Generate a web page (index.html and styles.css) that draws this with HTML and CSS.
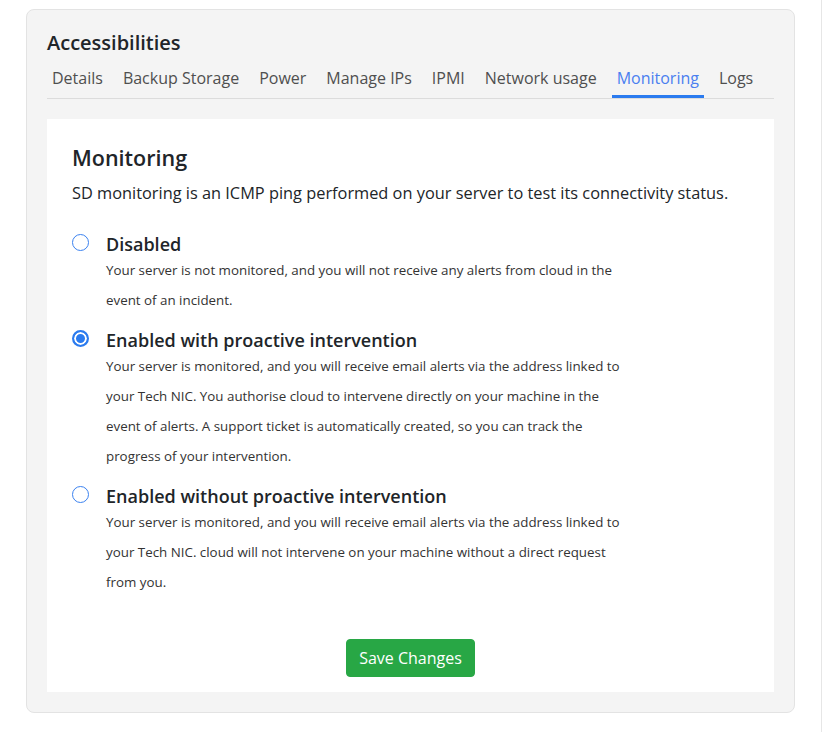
FILE: index.html
```html
<!DOCTYPE html>
<html lang="en">
<head>
<meta charset="utf-8">
<title>Accessibilities - Monitoring</title>
<link rel="stylesheet" href="styles.css">
</head>
<body>
<div class="page">
  <section class="card">
    <h2 class="card-title">Accessibilities</h2>
    <nav class="tabs">
      <a class="tab" href="#">Details</a>
      <a class="tab" href="#">Backup Storage</a>
      <a class="tab" href="#">Power</a>
      <a class="tab" href="#">Manage IPs</a>
      <a class="tab" href="#">IPMI</a>
      <a class="tab" href="#">Network usage</a>
      <a class="tab active" href="#">Monitoring</a>
      <a class="tab" href="#">Logs</a>
    </nav>
    <div class="panel">
      <h3 class="panel-title">Monitoring</h3>
      <p class="panel-intro">SD monitoring is an ICMP ping performed on your server to test its connectivity status.</p>

      <label class="option">
        <input class="radio" type="radio" name="monitoring">
        <span class="option-body">
          <span class="option-label">Disabled</span>
          <span class="option-desc">Your server is not monitored, and you will not receive any alerts from cloud in the event of an incident.</span>
        </span>
      </label>

      <label class="option">
        <input class="radio" type="radio" name="monitoring" checked>
        <span class="option-body">
          <span class="option-label">Enabled with proactive intervention</span>
          <span class="option-desc">Your server is monitored, and you will receive email alerts via the address linked to your Tech NIC. You authorise cloud to intervene directly on your machine in the event of alerts. A support ticket is automatically created, so you can track the progress of your intervention.</span>
        </span>
      </label>

      <label class="option">
        <input class="radio" type="radio" name="monitoring">
        <span class="option-body">
          <span class="option-label">Enabled without proactive intervention</span>
          <span class="option-desc">Your server is monitored, and you will receive email alerts via the address linked to your Tech NIC. cloud will not intervene on your machine without a direct request from you.</span>
        </span>
      </label>

      <div class="actions">
        <button class="btn-save" type="button">Save Changes</button>
      </div>
    </div>
  </section>
</div>
</body>
</html>
```
FILE: styles.css
```css
* { box-sizing: border-box; }

html, body {
  margin: 0;
  padding: 0;
  background: #ffffff;
}

body {
  font-family: "Open Sans", "Noto Sans", "Liberation Sans", sans-serif;
  color: #212529;
}

.page {
  width: 822px;
  min-height: 732px;
  border-right: 1px solid #e6e6e6;
  padding: 9px 0 0 26px;
}

.card {
  width: 769px;
  background: #f4f4f4;
  border: 1px solid #e3e3e3;
  border-radius: 8px;
  padding: 20px;
}

.card-title {
  margin: 0;
  font-size: 20px;
  line-height: 26px;
  font-weight: 600;
  color: #212529;
}

.tabs {
  display: flex;
  gap: 10px;
  margin-top: 10px;
  border-bottom: 1px solid #dcdcdc;
}

.tab {
  display: block;
  padding: 0 5px 5px;
  font-size: 16px;
  line-height: 24px;
  color: #4f4f4f;
  text-decoration: none;
  border-bottom: 3px solid transparent;
}

.tab.active {
  color: #4a7ff0;
  border-bottom-color: #2b7bef;
}

.panel {
  margin-top: 20px;
  background: #ffffff;
  padding: 25px 25px 15px;
}

.panel-title {
  margin: 0;
  font-size: 21.5px;
  line-height: 28px;
  font-weight: 600;
  color: #212529;
}

.panel-intro {
  margin: 8px 0 27px;
  font-size: 16.35px;
  line-height: 26px;
  color: #212529;
}

.option {
  display: flex;
  margin-bottom: 14px;
  cursor: pointer;
}

.radio {
  appearance: none;
  -webkit-appearance: none;
  flex: none;
  width: 17px;
  height: 17px;
  margin: 1px 17px 0 0;
  border: 1px solid #3b82f0;
  border-radius: 50%;
  background: #ffffff;
}

.radio:checked {
  border: 2px solid #2b7bef;
  background: #2b7bef;
  box-shadow: inset 0 0 0 2px #ffffff;
}

.option-body {
  display: flex;
  flex-direction: column;
}

.option-label {
  font-size: 18px;
  line-height: 22px;
  font-weight: 600;
  color: #212529;
}

.option-desc {
  width: 520px;
  font-size: 13.35px;
  line-height: 30px;
  color: #333333;
}

.actions {
  display: flex;
  justify-content: center;
  margin-top: 42px;
}

.btn-save {
  height: 38px;
  padding: 0 12px;
  font-family: inherit;
  font-size: 16px;
  color: #ffffff;
  background: #28a745;
  border: 1px solid #28a745;
  border-radius: 4px;
}
```
